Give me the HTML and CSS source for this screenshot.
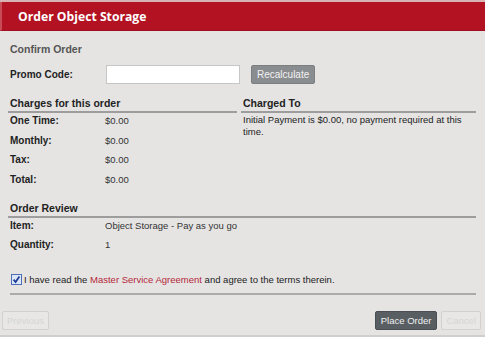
FILE: index.html
```html
<!DOCTYPE html>
<html lang="en">
<head>
    <meta charset="UTF-8">
    <title>Order Object Storage</title>
    <link rel="stylesheet" href="styles.css">
</head>
<body>
    <div class="dialog">
        <div class="titlebar"><h1>Order Object Storage</h1></div>
        <div class="content">
            <h2 class="step">Confirm Order</h2>
            <div class="promo">
                <label class="lbl" for="promo">Promo Code:</label>
                <input type="text" id="promo">
                <button class="btn">Recalculate</button>
            </div>

            <div class="cols">
                <div class="col">
                    <h3 class="head">Charges for this order</h3>
                    <div class="row"><span class="lbl">One Time:</span><span>$0.00</span></div>
                    <div class="row"><span class="lbl">Monthly:</span><span>$0.00</span></div>
                    <div class="row"><span class="lbl">Tax:</span><span>$0.00</span></div>
                    <div class="row"><span class="lbl">Total:</span><span>$0.00</span></div>
                </div>
                <div class="col">
                    <h3 class="head">Charged To</h3>
                    <p class="note">Initial Payment is $0.00, no payment required at this time.</p>
                </div>
            </div>

            <div class="review">
                <h3 class="head">Order Review</h3>
                <div class="row"><span class="lbl">Item:</span><span>Object Storage - Pay as you go</span></div>
                <div class="row"><span class="lbl">Quantity:</span><span>1</span></div>
            </div>

            <div class="agree">
                <span class="check"><svg width="9" height="9" viewBox="0 0 9 9"><path d="M1.6 4.6 L3.6 7 L7.4 1.4" fill="none" stroke="#1d3a94" stroke-width="1.7"/></svg></span>
                <span>I have read the <a href="#">Master Service Agreement</a> and agree to the terms therein.</span>
            </div>
        </div>
        <div class="footer">
            <button class="btn off">Previous</button>
            <div class="right">
                <button class="btn dark">Place Order</button>
                <button class="btn off">Cancel</button>
            </div>
        </div>
    </div>
</body>
</html>
```
FILE: styles.css
```css
body {margin: 0; background: #e5e4e3; font-family: "Liberation Sans", Arial, sans-serif; font-size: 9.5px; color: #222;}
.dialog {width: 485px; height: 337px; border-top: 2px solid #d9b2b4; box-sizing: border-box; display: flex; flex-direction: column;}
.titlebar {background: #b31222; height: 28px; border-bottom: 1px solid #9e1020; border-left: 2px solid #c84c58; display: flex; align-items: center; padding-left: 16px;}
.titlebar h1 {margin: 1px 0 0 0; color: #fff; font-family: "Open Sans", sans-serif; font-size: 12.2px; font-weight: 700;}
.content {padding: 0 9px 0 8px; flex: 1;}
.step {margin: 12px 0 0 2px; font-size: 10.5px; color: #555; font-weight: bold;}
.promo {display: flex; align-items: center; margin-top: 9px; height: 20px;}
.lbl {font-weight: bold; font-size: 10px; width: 97px; box-sizing: border-box; display: inline-block; padding-left: 2px; flex: none;}
.promo input {width: 134px; height: 19px; box-sizing: border-box; border: 1px solid #c6c6c6; background: #fff; padding: 0; margin: 0 11px 0 1px;}
.btn {font-family: "Liberation Sans", Arial, sans-serif; font-size: 9.5px; border: 1px solid #7c7f82; background: #8a8d90; color: #f2f2f2; padding: 0 4px; height: 19px; border-radius: 2px;}
.promo .btn {padding: 0 5px; font-size: 10px;}
.cols {display: flex; gap: 4px; margin-top: 13px;}
.col {flex: 0 0 229px;}
.col:last-child {flex: 0 0 235px;}
.head {margin: 0; font-size: 10.5px; font-weight: bold; color: #222; border-bottom: 2px solid #9d9d9d; padding: 0 0 1px 2px; line-height: 13px;}
.row {height: 16px; line-height: 16px; margin-bottom: 3.7px; display: flex;}
.row span:last-child {color: #333;}
.note {margin: 1px 0 0 2px; line-height: 12px; color: #222;}
.review {margin-top: 10px;}
.agree {margin: 21px 0 0 2px; display: flex; align-items: center; gap: 2px; padding: 0 0 8px 1px; border-bottom: 2px solid #aaa;}
.agree a {color: #b4283a; text-decoration: none;}
.check {width: 11px; height: 11px; box-sizing: border-box; border: 1px solid #4d6fb5; background: #dbe6fa; display: flex; align-items: center; justify-content: center; flex: none;}
.footer {display: flex; justify-content: space-between; align-items: center; padding: 3px 4px 1px 2px; height: 28px; border-bottom: 2px solid #d0cfce;}
.right {display: flex; gap: 4px;}
.dark {background: #595e63; border-color: #4a4e52; color: #f0f0f0; padding: 0 5px;}
.off {background: #e8e7e6; border-color: #d2d1d0; color: #d6d5d4;}
```
